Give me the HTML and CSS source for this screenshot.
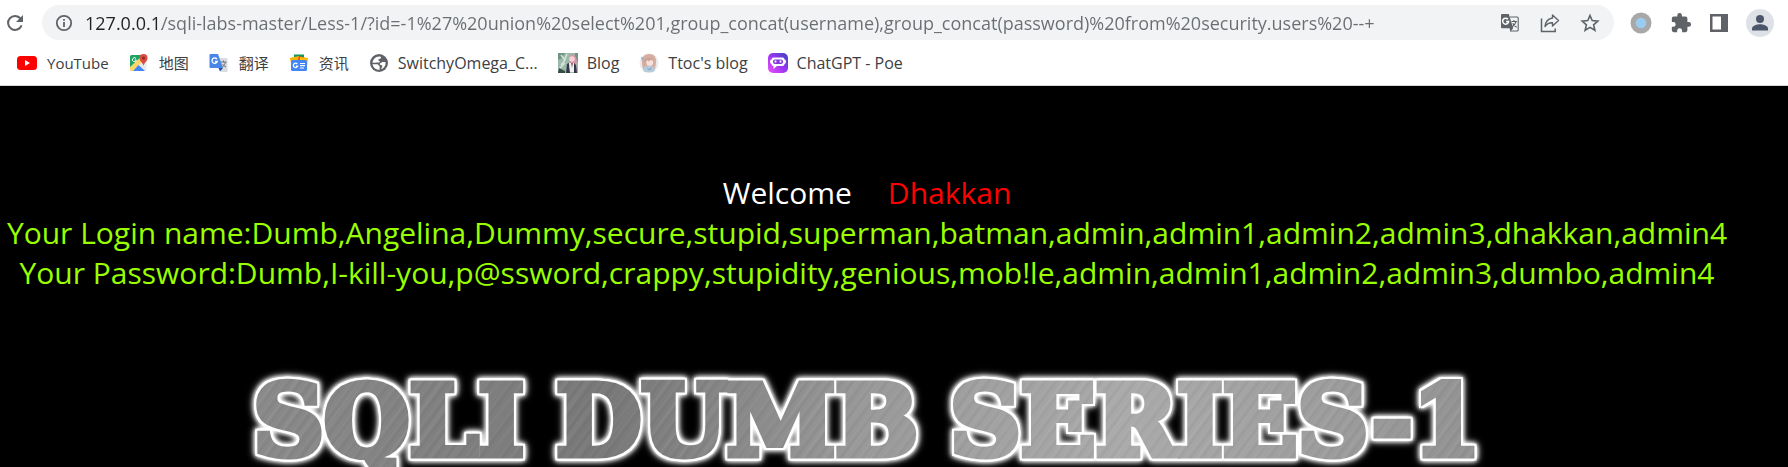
FILE: index.html
```html
<!DOCTYPE html>
<html lang="en">
<head>
<meta charset="utf-8">
<title>Less-1</title>
<link rel="stylesheet" href="styles.css">
</head>
<body>
<header class="browser">
  <div class="toolbar">
    <button class="tool reload" aria-label="Reload"><svg width="20" height="20" viewBox="0 0 20 20"><path d="M16.6 12.4A7 7 0 1 1 15.6 5.6" fill="none" stroke="#5f6368" stroke-width="2"/><path d="M18 2v7h-7z" fill="#5f6368"/></svg></button>
    <form class="omnibox">
      <button type="button" class="tool info" aria-label="Site information"><svg width="18" height="18" viewBox="0 0 18 18"><circle cx="9" cy="9" r="7.2" fill="none" stroke="#5f6368" stroke-width="1.8"/><path d="M8.1 8h1.8v5H8.1zM8.1 5h1.8v1.8H8.1z" fill="#5f6368"/></svg></button>
      <input class="url" type="text" aria-label="Address" spellcheck="false" value="127.0.0.1/sqli-labs-master/Less-1/?id=-1%27%20union%20select%201,group_concat(username),group_concat(password)%20from%20security.users%20--+">
      <div class="actions">
        <button type="button" class="tool" aria-label="Translate"><svg width="20" height="20" viewBox="0 0 20 20"><path d="M10 4h7.2a1 1 0 0 1 1 1v12a1 1 0 0 1-1 1H10" fill="#f1f3f4" stroke="#5f6368" stroke-width="1.1"/><path d="M2 1h6.8l4.4 14.3H2a1 1 0 0 1-1-1V2a1 1 0 0 1 1-1zM9.5 15.3h3.7L10.5 18.6z" fill="#5f6368"/><path d="M8 6.3A3 3 0 1 0 8.6 8.6H6" fill="none" stroke="#fff" stroke-width="1.5"/><path d="M11.5 8.5h5.5M14 7v1.5M16 8.5q-1 4-4 5.5M12.7 10.2q1.5 3 4 4" fill="none" stroke="#5f6368" stroke-width="1.1"/></svg></button>
        <button type="button" class="tool" aria-label="Share"><svg width="20" height="20" viewBox="0 0 20 20"><path d="M1.5 5.5v13h13.7v-3" fill="none" stroke="#5f6368" stroke-width="1.5"/><path d="M12.500 2l6 5.500-6 5.500v-3.200q-4.500-.3-7.500 3.700.8-7.500 7.500-8.500z" fill="none" stroke="#5f6368" stroke-width="1.400" stroke-linejoin="round"/></svg></button>
        <button type="button" class="tool" aria-label="Bookmark this page"><svg width="20" height="20" viewBox="0 0 20 20"><path d="M10 2.500l2.200 5.100 5.600.5-4.200 3.700 1.300 5.500L10 14.400l-4.900 2.900 1.300-5.500L2.200 8.100l5.600-.5z" fill="none" stroke="#5f6368" stroke-width="1.600"/></svg></button>
      </div>
    </form>
    <div class="extensions">
      <button class="tool" aria-label="Proxy extension"><svg width="22" height="22" viewBox="0 0 22 22"><circle cx="11" cy="11" r="10.500" fill="#a8a8a8"/><circle cx="11" cy="11" r="5.300" fill="#99ccee"/></svg></button>
      <button class="tool" aria-label="Extensions"><svg width="22" height="22" viewBox="0 0 24 24"><path d="M20.500 11H19V7a2 2 0 0 0-2-2h-4V3.500a2.500 2.500 0 0 0-5 0V5H4a2 2 0 0 0-2 2v3.800h1.500a2.700 2.700 0 0 1 0 5.400H2V20a2 2 0 0 0 2 2h3.800v-1.500a2.700 2.700 0 0 1 5.400 0V22H17a2 2 0 0 0 2-2v-4h1.500a2.500 2.500 0 0 0 0-5z" fill="#5f6368"/></svg></button>
      <button class="tool" aria-label="Side panel"><svg width="18" height="18" viewBox="0 0 18 18"><path d="M0 0h18v18H0zM2.500 2.500v13H11v-13z" fill="#5f6368" fill-rule="evenodd"/></svg></button>
      <button class="tool" aria-label="Profile"><svg width="28" height="28" viewBox="0 0 28 28"><circle cx="14" cy="14" r="14" fill="#dee1e6"/><circle cx="14" cy="10" r="4" fill="#4b566b"/><path d="M6 21.500v-2c0-2.800 5.300-4.200 8-4.200s8 1.400 8 4.200v2z" fill="#4b566b"/></svg></button>
    </div>
  </div>
  <nav class="bookmarks" aria-label="Bookmarks">
    <a class="bookmark" href="#"><svg width="20" height="20" viewBox="0 0 20 20"><rect y="3" width="20" height="14" rx="3.500" fill="#f00"/><path d="M8 7v6l5-3z" fill="#fff"/></svg>YouTube</a>
    <a class="bookmark" href="#"><svg width="20" height="20" viewBox="0 0 20 20"><rect x="1" y="2" width="16" height="16" rx="1.500" fill="#e8eaed"/><path d="M1 3.500A1.500 1.500 0 0 1 2.500 2H14L1 15z" fill="#1fa463"/><path d="M1 14L12 4l3 3L3.500 18H2.500A1.500 1.500 0 0 1 1 16.500z" fill="#fdd663"/><path d="M4 18l5.500-6 6.500 6z" fill="#4285f4"/><path d="M11 10l6.500 7V8z" fill="#e8eaed"/><path d="M7 5.500A2 2 0 1 0 7.400 7H5.700" fill="none" stroke="#fff"/><path d="M14.500 13c-.5-3.500-4-4.500-4-8a4 4 0 0 1 8 0c0 3.500-3.500 4.500-4 8z" fill="#dd4b3e"/><circle cx="14.500" cy="5" r="1.500" fill="#7f2c27"/></svg>地图</a>
    <a class="bookmark" href="#"><svg width="20" height="20" viewBox="0 0 20 20"><path d="M8 5h9.500a1 1 0 0 1 1 1v12a1 1 0 0 1-1 1H12z" fill="#dadce0"/><path d="M1.500 1H9l5 14H1.500a1 1 0 0 1-1-1V2a1 1 0 0 1 1-1z" fill="#4a86e8"/><path d="M9.500 15H14l-3 3.500z" fill="#2850a8"/><path d="M8 6.200A2.700 2.700 0 1 0 8.300 8.500H6" fill="none" stroke="#fff" stroke-width="1.300"/><path d="M12 9h5.500M14.500 7.500V9M16.500 9q-.5 3-3 5M13.500 11q1 2 3.500 3" fill="none" stroke="#6f7780"/></svg>翻译</a>
    <a class="bookmark" href="#"><svg width="20" height="20" viewBox="0 0 20 20"><path d="M5 1.500h10v7H5z" fill="#159957"/><path d="M.8 5l9-2 2 8-9 2z" fill="#f4b400"/><path d="M10 3l8.500 2.500L17 13 8 10z" fill="#ea4335"/><path d="M11 4l8 1-.8 7H10z" fill="#fbbc04"/><rect x="2" y="7" width="16" height="11" rx="1.500" fill="#4285f4"/><path d="M8.300 11A2.200 2.200 0 1 0 8.700 13H6.700M11 10.500h5M11 12.700h5M11 15h4" fill="none" stroke="#fff" stroke-width="1.200"/></svg>资讯</a>
    <a class="bookmark latin" href="#"><svg width="20" height="20" viewBox="0 0 20 20"><circle cx="10" cy="10" r="9" fill="#5f6368"/><path d="M10.500 3.500c1.500-.2 2 .8 1.200 1.700-.7.800-2.400.5-2.400 1.700 0 .9 1.500.8 1.500 1.800 0 .9-1.600.8-2.800.8-1.800 0-2.500.5-4.500.2.200-3.200 3-6.400 7-6.200zM3.500 11.200h4.800c1.400 0 .9 1.600 2.300 1.900v3.600c-3.600.3-6.500-2.300-7.100-5.500zM12.400 16.200c-.7-1.600 1.400-2 .9-3.300-.4-1-2.600-.6-2.600-1.900s1.500-.9 2.500-2.100h3.300c.5 2.800-1 6-4.100 7.300z" fill="#fff"/></svg>SwitchyOmega_C...</a>
    <a class="bookmark latin" href="#"><svg width="20" height="20" viewBox="0 0 20 20"><path d="M0 0h20v20H0z" fill="#9bb8a9"/><path d="M0 0h7l-3 5-4 2zM17 0h3v9l-3-3z" fill="#6f9483"/><path d="M3 2l4 5-4 5M1 16l6-6M9 1l-2 5" fill="none" stroke="#d7e5dc" stroke-width="1.500"/><path d="M11 4q3-4 6-1 3 3 1 9l1 6H9l2-9z" fill="#d794aa"/><circle cx="14" cy="6" r="2.800" fill="#f6d0d6"/><path d="M9 11l2-1 1 10H8zM16 10l2 2 1 8h-3z" fill="#343846"/><path d="M11 10h5v9h-4z" fill="#edf1f1"/><path d="M13 10l1 5 1-5z" fill="#a54d5d"/><path d="M1 15l6 3v2H0z" fill="#344c43"/></svg>Blog</a>
    <a class="bookmark latin" href="#"><svg width="20" height="20" viewBox="0 0 20 20"><circle cx="10" cy="10" r="9.500" fill="#eeeae9"/><path d="M3 11q-1-10 7-10t7 9l-1 6H4z" fill="#d6ada1"/><path d="M7 8q3-3 7 0v3q-3 4-6 1z" fill="#f7e2d9"/><path d="M5 8q2-5 10-2l-4 1-1 2-1-2-4 3z" fill="#c9a096"/><path d="M5 14q5-3 10 0l1 4q-6 3-12 0z" fill="#b6ccdb"/><path d="M2 4l3 1-2 3zM8 14l2 2 3-2-1 3H9z" fill="#91abc2"/></svg>Ttoc's blog</a>
    <a class="bookmark latin" href="#"><svg width="20" height="20" viewBox="0 0 20 20"><defs><linearGradient id="poe" x1="0" y1="1" x2="1" y2="0"><stop offset="0" stop-color="#f050ff"/><stop offset=".5" stop-color="#9a35f4"/><stop offset="1" stop-color="#3c46b8"/></linearGradient></defs><rect width="20" height="20" rx="5" fill="url(#poe)"/><path d="M5.500 4.500h9a2 2 0 0 1 2 2q1.500 0 1.500 2t-1.500 2.500a2 2 0 0 1-2 2H9L5.500 16v-3a2 2 0 0 1-2-2Q2 10.500 2 8.500t1.500-2a2 2 0 0 1 2-2z" fill="#fff"/><rect x="5" y="6.500" width="10" height="4.500" rx="2" fill="#8334df"/><path d="M7.500 7.500v2M12.500 7.500v2" stroke="#fff" stroke-width="1.800"/></svg>ChatGPT - Poe</a>
  </nav>
</header>
<main class="page">
  <section class="messages">
    <p class="line welcome"><span>Welcome</span><span class="name">Dhakkan</span></p>
    <p class="line">Your Login name:Dumb,Angelina,Dummy,secure,stupid,superman,batman,admin,admin1,admin2,admin3,dhakkan,admin4</p>
    <p class="line">Your Password:Dumb,I-kill-you,p@ssword,crappy,stupidity,genious,mob!le,admin,admin1,admin2,admin3,dumbo,admin4</p>
  </section>
  <h1 class="series"><span>SQLI</span><span>DUMB</span><span>SERIES-1</span></h1>
</main>
</body>
</html>
```
FILE: styles.css
```css
* { box-sizing: border-box; }
body {
  margin: 0;
  height: 100vh;
  display: flex;
  flex-direction: column;
  overflow: hidden;
  background: #000;
  font-family: "Open Sans", "Noto Sans CJK SC", sans-serif;
}
.browser {
  flex: none;
  background: #fff;
  border-bottom: 1px solid #d5d7da;
}
.toolbar {
  display: flex;
  align-items: center;
  padding: 5px 14px 0 5px;
}
.tool {
  display: flex;
  padding: 0;
  border: 0;
  background: none;
}
.omnibox {
  flex: 1;
  display: flex;
  align-items: center;
  height: 35px;
  margin: 0 16px 0 17px;
  padding: 0 14px 0 13px;
  border-radius: 18px;
  background: #f1f3f4;
}
.url {
  flex: 1;
  min-width: 0;
  height: 30px;
  margin-left: 12px;
  padding: 0;
  border: 0;
  outline: 0;
  font: 18px/30px "Open Sans", sans-serif;
  color: transparent;
  background: linear-gradient(to right, #202124 77px, #6a6d71 77px);
  -webkit-background-clip: text;
  background-clip: text;
}
.actions { display: flex; gap: 20px; }
.extensions {
  display: flex;
  align-items: center;
  gap: 18px;
}
.bookmarks {
  display: flex;
  align-items: center;
  gap: 20px;
  height: 45px;
  padding: 0 17px;
}
.bookmark {
  display: flex;
  align-items: center;
  gap: 10px;
  color: #3c4043;
  font-size: 15px;
  line-height: 20px;
  text-decoration: none;
  white-space: nowrap;
}
.latin {
  gap: 9px;
  font-size: 16px;
}
.page {
  flex: 1;
  min-height: 0;
  padding: 87px 54px 0 0;
}
.messages {
  display: flex;
  flex-direction: column;
  align-items: center;
}
.line {
  margin: 0;
  color: #9f0;
  font-size: 30px;
  line-height: 40px;
  white-space: nowrap;
}
.welcome {
  display: flex;
  gap: 36px;
  color: #fff;
}
.name { color: #f00; }
.series {
  display: flex;
  justify-content: center;
  gap: 32px;
  margin: 72px 0 0;
  padding-bottom: 12px;
  font: bold 98px/112px "DejaVu Serif", serif;
  color: transparent;
  -webkit-text-stroke: 7px transparent;
  background: repeating-linear-gradient(127deg, transparent 0 3px, #ffffff0e 4px, transparent 5px, #0000000a 8px, transparent 9px), repeating-linear-gradient(125deg, transparent 0 11px, #ffffff0c 14px, transparent 17px), linear-gradient(100deg, #8a8a8a 15%, #787878 35%, #999 50%, #aaa 65%, #929292 85%, #aaa);
  -webkit-background-clip: text;
  background-clip: text;
  filter: drop-shadow(2px 0 #fff) drop-shadow(-2px 0 #fff) drop-shadow(0 2px #fff) drop-shadow(0 -2px #fff) drop-shadow(0 0 2px #fff) drop-shadow(0 0 3px #fff);
}
```
